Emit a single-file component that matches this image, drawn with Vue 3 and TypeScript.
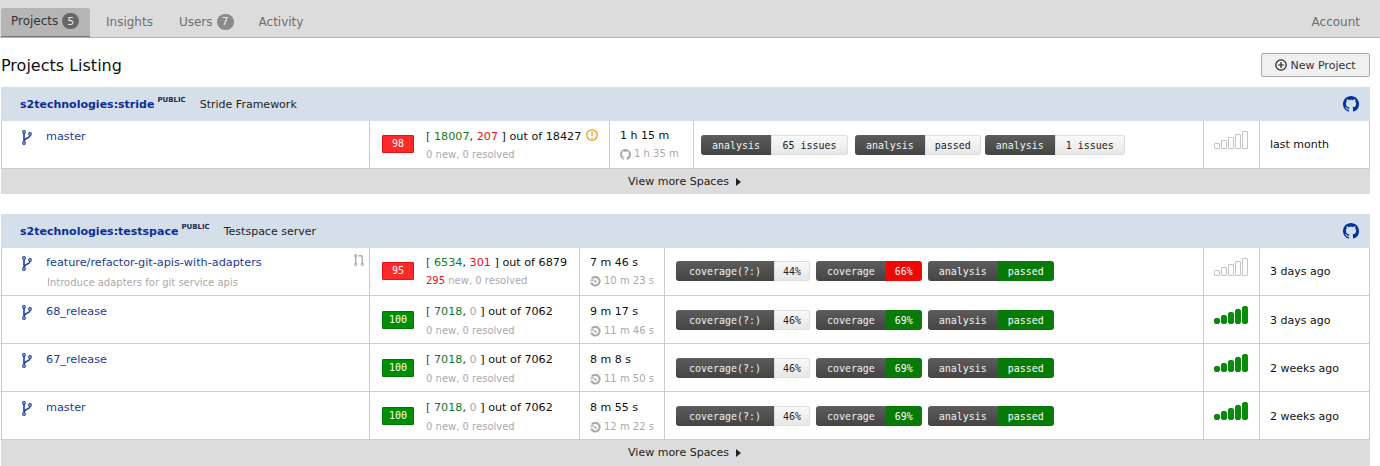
<script setup lang="ts">
interface Badge { label: string; value: string; tone: string }
interface Row {
  branch: string; note?: string; pr?: boolean; score: number; ok: string; bad: string; total: string;
  fresh: string; freshBad?: boolean; warn?: boolean; time: string; prev: string; prevIcon: string;
  badges: Badge[]; good: boolean; when: string
}
interface Section { name: string; desc: string; cols: string; rows: Row[] }

const cov = (a: string, b: string, tone: string): Badge[] => [
  { label: 'coverage(?:)', value: a, tone: 'plain' },
  { label: 'coverage', value: b, tone },
  { label: 'analysis', value: 'passed', tone: 'green' }
]

const sections: Section[] = [
  {
    name: 's2technologies:stride', desc: 'Stride Framework', cols: 'cols-a',
    rows: [{
      branch: 'master', score: 98, ok: '18007', bad: '207', total: '18427', fresh: '0', warn: true,
      time: '1 h 15 m', prev: '1 h 35 m', prevIcon: 'gh',
      badges: [
        { label: 'analysis', value: '65 issues', tone: 'plain' },
        { label: 'analysis', value: 'passed', tone: 'plain' },
        { label: 'analysis', value: '1 issues', tone: 'plain' }
      ], good: false, when: 'last month'
    }]
  },
  {
    name: 's2technologies:testspace', desc: 'Testspace server', cols: 'cols-b',
    rows: [
      { branch: 'feature/refactor-git-apis-with-adapters', note: 'Introduce adapters for git service apis', pr: true, score: 95, ok: '6534', bad: '301', total: '6879', fresh: '295', freshBad: true, time: '7 m 46 s', prev: '10 m 23 s', prevIcon: 'hist', badges: cov('44%', '66%', 'red'), good: false, when: '3 days ago' },
      { branch: '68_release', score: 100, ok: '7018', bad: '0', total: '7062', fresh: '0', time: '9 m 17 s', prev: '11 m 46 s', prevIcon: 'hist', badges: cov('46%', '69%', 'green'), good: true, when: '3 days ago' },
      { branch: '67_release', score: 100, ok: '7018', bad: '0', total: '7062', fresh: '0', time: '8 m 8 s', prev: '11 m 50 s', prevIcon: 'hist', badges: cov('46%', '69%', 'green'), good: true, when: '2 weeks ago' },
      { branch: 'master', score: 100, ok: '7018', bad: '0', total: '7062', fresh: '0', time: '8 m 55 s', prev: '12 m 22 s', prevIcon: 'hist', badges: cov('46%', '69%', 'green'), good: true, when: '2 weeks ago' }
    ]
  }
]
const bars = [6, 9, 12, 15, 18]
const valueClass = (v: string): string => (v.endsWith('%') ? 'pct' : v === 'passed' ? 'word' : v.length === 9 ? 'count-long' : 'count-word')
const ghPath = 'M8 0C3.58 0 0 3.58 0 8c0 3.54 2.29 6.53 5.47 7.59.4.07.55-.17.55-.38 0-.19-.01-.82-.01-1.49-2.01.37-2.53-.49-2.69-.94-.09-.23-.48-.94-.82-1.13-.28-.15-.68-.52-.01-.53.63-.01 1.08.58 1.23.82.72 1.21 1.87.87 2.33.66.07-.52.28-.87.51-1.07-1.78-.2-3.64-.89-3.64-3.95 0-.87.31-1.59.82-2.15-.08-.2-.36-1.02.08-2.12 0 0 .67-.21 2.2.82.64-.18 1.32-.27 2-.27s1.36.09 2 .27c1.53-1.04 2.2-.82 2.2-.82.44 1.1.16 1.92.08 2.12.51.56.82 1.27.82 2.15 0 3.07-1.87 3.75-3.65 3.95.29.25.54.73.54 1.48 0 1.07-.01 1.93-.01 2.2 0 .21.15.46.55.38A8.01 8.01 0 0 0 16 8c0-4.42-3.58-8-8-8z'
</script>

<template>
  <div class="page">
    <nav class="nav">
      <a class="tab active">Projects <span class="count dark">5</span></a>
      <a class="tab">Insights</a>
      <a class="tab">Users <span class="count">7</span></a>
      <a class="tab">Activity</a>
      <a class="tab account">Account</a>
    </nav>

    <main class="content">
      <div class="title-row">
        <h1>Projects Listing</h1>
        <button class="new-btn" type="button">
          <svg viewBox="0 0 12 12" width="12" height="12" fill="none" stroke="#222" stroke-width="1.2">
            <circle cx="6" cy="6" r="5.2" /><path d="M6 3v6M3 6h6" />
          </svg>
          New Project
        </button>
      </div>

      <section v-for="s in sections" :key="s.name" class="space">
        <header class="space-head">
          <a class="space-name">{{ s.name }}</a>
          <sup class="public">PUBLIC</sup>
          <span class="space-desc">{{ s.desc }}</span>
          <svg class="gh-mark" viewBox="0 0 16 16" width="16" height="16"><path fill="#0033a0" :d="ghPath" /></svg>
        </header>

        <div v-for="r in s.rows" :key="r.branch + r.when" class="row" :class="s.cols">
          <div class="cell name">
            <svg class="branch" viewBox="0 0 10 15" width="10" height="15" fill="none" stroke="#1e3f9e" stroke-width="1.2">
              <circle cx="2" cy="2" r="1.3" /><circle cx="2" cy="13" r="1.3" /><circle cx="8" cy="4" r="1.3" />
              <path d="M2 3.4v8.2M8 5.4C8 8.2 3 7.6 2.4 10.6" stroke-width="1.6" />
            </svg>
            <div class="name-text">
              <a class="branch-link">{{ r.branch }}</a>
              <div v-if="r.note" class="note">{{ r.note }}</div>
            </div>
            <svg v-if="r.pr" class="pr" viewBox="0 0 10 12" width="10" height="12" fill="none" stroke="#aaa" stroke-width="1.1">
              <circle cx="1.7" cy="1.7" r="1.1" /><circle cx="1.7" cy="10.3" r="1.1" /><circle cx="8.3" cy="10.3" r="1.1" />
              <path d="M1.7 2.8v6.4M8.3 9.2V3.2Q8.3 1.7 6.8 1.7H4.6" stroke-width="1.4" />
            </svg>
          </div>

          <div class="cell tests">
            <span class="score" :class="r.score === 100 ? 'score-good' : 'score-bad'">{{ r.score }}</span>
            <div class="tests-text">
              <div class="line wide">
                <span class="br">[</span> <span class="ok">{{ r.ok }}</span>, <span :class="r.bad === '0' ? 'zero' : 'bad'">{{ r.bad }}</span> <span>]</span> out of {{ r.total }}
                <svg v-if="r.warn" class="warn" viewBox="0 0 12 12" width="12" height="12" fill="none" stroke="#f39c12" stroke-width="1.3">
                  <circle cx="6" cy="6" r="5.2" /><path d="M6 2.8v4M6 8.2v1.2" />
                </svg>
              </div>
              <div class="sub"><span :class="{ bad: r.freshBad }">{{ r.fresh }}</span> new, 0 resolved</div>
            </div>
          </div>

          <div class="cell time">
            <div class="line">{{ r.time }}</div>
            <div class="sub">
              <svg v-if="r.prevIcon === 'gh'" viewBox="0 0 16 16" width="11" height="11"><path fill="#aaa" :d="ghPath" /></svg>
              <svg v-else viewBox="0 0 12 12" width="11" height="11" fill="none" stroke="#aaa" stroke-width="2.3">
                <path d="M2 2.9A4.7 4.7 0 1 1 1.3 7" /><circle cx="6" cy="6" r="1.3" fill="#aaa" stroke="none" /><path d="M.3 4.6h4.2" stroke-width="1.4" />
              </svg>
              {{ r.prev }}
            </div>
          </div>

          <div class="cell badges">
            <div v-for="b in r.badges" :key="b.label + b.value" class="badge">
              <span class="b-label" :class="{ long: b.label.length > 8 }">{{ b.label }}</span>
              <span class="b-value" :class="[b.tone, valueClass(b.value)]">{{ b.value }}</span>
            </div>
          </div>

          <div class="cell spark">
            <span v-for="h in bars" :key="h" class="bar" :class="{ on: r.good }" :style="{ height: h + 'px' }"></span>
          </div>

          <div class="cell when">{{ r.when }}</div>
        </div>

        <footer class="more">
          View more Spaces
          <svg class="caret" viewBox="0 0 5 8" width="5" height="8"><path d="M0 0l5 4-5 4z" fill="#222" /></svg>
        </footer>
      </section>
    </main>
  </div>
</template>

<style>
html, body { margin: 0; background: #fff; overflow: hidden; }
</style>

<style scoped>
.page { width: 1380px; height: 466px; font-family: "DejaVu Sans", Verdana, sans-serif; font-size: 11px; color: #111; overflow: hidden; }
.nav { height: 37px; background: #dcdcdc; border-bottom: 1px solid #b4b4b4; display: flex; align-items: flex-end; padding-left: 1px; }
.tab { height: 29px; padding: 0 10px 2px; display: flex; align-items: center; gap: 4px; font-size: 12px; color: #6e6e6e; box-sizing: border-box; white-space: nowrap; }
.tab + .tab { margin-left: 6px; }
.tab:nth-child(4) { margin-left: 5px; }
.tab.active { width: 89px; background: #b5b5b5; color: #333; border-radius: 3px 3px 0 0; border-bottom: 1px solid #777; }
.account { margin-left: auto !important; margin-right: 10px; }
.count { width: 17px; height: 16px; border-radius: 8px; background: #8a8a8a; color: #e8e8e8; font-size: 11px; display: inline-flex; align-items: center; justify-content: center; }
.count.dark { background: #666; }
.content { padding: 0 10px 0 1px; }
.title-row { display: flex; justify-content: space-between; align-items: center; height: 24px; padding: 15px 0 10px; }
h1 { margin: 0; font-size: 16px; font-weight: 400; color: #111; }
.new-btn { width: 109px; height: 24px; box-sizing: border-box; background: #f0f0f0; border: 1px solid #aaa; border-radius: 2px; display: flex; align-items: center; justify-content: center; gap: 3px; font: 11px "DejaVu Sans", Verdana, sans-serif; color: #333; padding: 0; }
.space { margin-bottom: 20px; }
.space-head { height: 34px; background: #d5dfea; display: flex; align-items: center; padding: 0 19px; box-sizing: border-box; }
.space-name { font-weight: 700; color: #0b2d9a; font-size: 11px; }
.public { font-size: 7px; font-weight: 700; color: #1a2a55; margin: 0 14px 0 3px; position: relative; top: -4px; line-height: 1; vertical-align: baseline; }
.space-desc { color: #222; }
.gh-mark { margin-left: auto; margin-right: -8px; }
.row { --s: 0px; --n: 0px; display: grid; height: 48px; box-sizing: border-box; border-bottom: 1px solid #ccc; border-left: 1px solid #ccc; border-right: 1px solid #ccc; }
.row + .row { --s: 1px; }
.cols-a { --n: 1px; grid-template-columns: 368px 240px 84px 510px 56px 1fr; }
.cols-b { grid-template-columns: 368px 210px 85px 539px 56px 1fr; }
.cell { border-right: 1px solid #ccc; box-sizing: border-box; display: flex; min-width: 0; }
.cell:last-child { border-right: 0; }
.name { padding: calc(8px + var(--s) + var(--n)) 5px 0 20px; }
.branch { flex: none; }
.name-text { margin-left: 14px; line-height: 14px; }
.branch-link { color: #1c3a9c; font-size: 11.25px; }
.note { color: #aaa; font-size: 10px; margin: 6px 0 0 1px; line-height: 14px; }
.pr { margin-left: auto; margin-top: -2px; }
.tests { padding: var(--s) 0 0 12px; align-items: flex-start; }
.score { width: 32px; height: 18px; margin-top: 14px; flex: none; box-sizing: border-box; border-radius: 1px; color: #fff; font: 10px/16px "DejaVu Sans Mono", monospace; text-align: center; }
.score-bad { background: #ff2b2b; border: 1px solid #e81010; }
.score-good { background: #008f00; border: 1px solid #007a00; }
.tests-text { margin-left: 12px; padding-top: 8px; }
.line { line-height: 14px; white-space: nowrap; }
.line.wide { font-size: 11.2px; }
.sub { color: #aaa; font-size: 10px; line-height: 14px; margin-top: calc(4px + var(--s)); white-space: nowrap; display: flex; align-items: center; gap: 3px; }
.tests .sub { display: block; }
.br { color: #1c3a9c; }
.ok { color: #1a7a1a; }
.bad { color: #f01020; }
.zero { color: #aaa; }
.warn { vertical-align: -1px; margin-left: 1px; }
.time { flex-direction: column; padding: calc(8px + var(--s)) 0 0 10px; }
.badges { align-items: flex-start; padding: calc(13px + var(--s) + var(--n)) 0 0 11px; gap: 6px; }
.cols-a .badges { padding-left: 7px; gap: 7px; }
.cols-a .badge + .badge + .badge { margin-left: -3px; }
.badge { display: flex; height: 20px; font: 9.96px/21px "DejaVu Sans Mono", monospace; }
.b-label { padding: 0 11px; color: #f2f2f2; background: linear-gradient(#5c5c5c, #444); border-radius: 3px 0 0 3px; }
.b-label.long { padding: 0 13px; }
.b-value { border-radius: 0 3px 3px 0; }
.pct { padding: 0 9px; }
.word { padding: 0 10px; }
.count-word { padding: 0 11px; }
.count-long { padding: 0 11.5px; }
.plain { background: linear-gradient(#fafafa, #e6e6e6); color: #222; box-shadow: inset 0 0 0 1px #ddd; }
.red { background: #f00808; color: #fff; }
.green { background: #087a08; color: #fff; }
.spark { align-items: flex-end; padding: 0 0 19px 10px; gap: 1px; }
.bar { width: 6px; box-sizing: border-box; border: 1px solid #c4c4c4; border-radius: 1px; }
.bar.on { background: #0a8a0a; border-color: #0a8a0a; border-radius: 2px; }
.when { padding: calc(16px + var(--s) + 1px) 0 0 10px; color: #111; line-height: 14px; }
.more { height: 26px; box-sizing: border-box; padding-bottom: 1px; background: #dcdcdc; display: flex; align-items: center; justify-content: center; gap: 7px; color: #222; }
.space:first-of-type .more { height: 25px; padding-bottom: 0; }
.caret { margin-right: 2px; }
</style>
